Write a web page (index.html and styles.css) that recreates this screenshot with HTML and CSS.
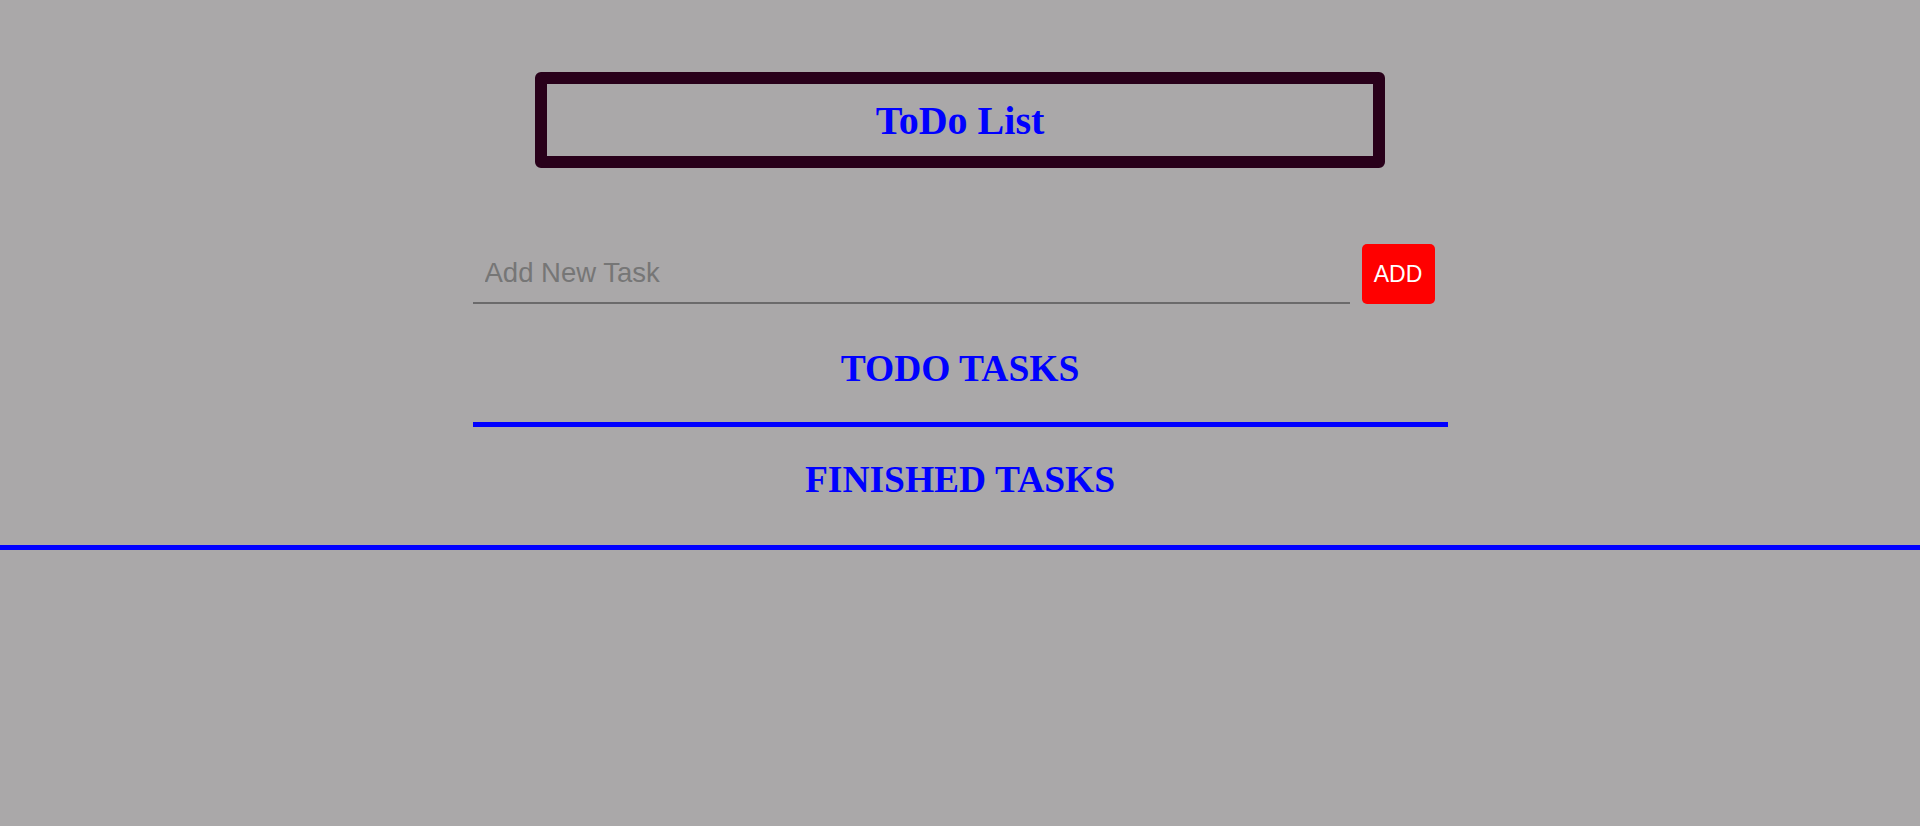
FILE: index.html
```html
<!DOCTYPE html>
<html lang="en">
<head>
<meta charset="utf-8">
<title>ToDo List</title>
<link rel="stylesheet" href="styles.css">
</head>
<body>
  <header class="title-box">
    <h1 class="title">ToDo List</h1>
  </header>
  <main class="container">
    <form class="add-form" onsubmit="return false">
      <input class="task-input" type="text" placeholder="Add New Task">
      <button class="add-btn" type="submit">ADD</button>
    </form>
    <section class="todo">
      <h2 class="section-title todo-title">TODO TASKS</h2>
      <div class="divider"></div>
    </section>
    <section class="finished">
      <h2 class="section-title finished-title">FINISHED TASKS</h2>
    </section>
  </main>
  <div class="full-rule"></div>
</body>
</html>
```

FILE: styles.css
```css
html, body {
  margin: 0;
  padding: 0;
}

body {
  background: #aaa8a9;
  font-family: "Liberation Serif", "Times New Roman", serif;
  min-height: 826px;
}

.title-box {
  width: 826px;
  margin: 72px auto 0;
  border: 12px solid #29001a;
  border-radius: 6px;
  height: 70px;
  padding-top: 2px;
  display: flex;
  align-items: center;
  justify-content: center;
}

.title {
  margin: 0;
  font-size: 40px;
  line-height: 70px;
  font-weight: bold;
  color: #0000ff;
}

.container {
  width: 975px;
  margin: 0 auto;
}

.add-form {
  display: flex;
  gap: 12px;
  margin-top: 76px;
}

.task-input {
  width: 877px;
  height: 60px;
  box-sizing: border-box;
  border: none;
  border-bottom: 2px solid #6b6a6b;
  background: transparent;
  padding: 0 12px;
  font-family: "Liberation Sans", Arial, sans-serif;
  font-size: 27.5px;
  color: #333;
  outline: none;
}

.task-input::placeholder {
  color: #767676;
}

.add-btn {
  width: 73px;
  height: 60px;
  border: none;
  border-radius: 5px;
  background: #ff0000;
  color: #ffffff;
  font-family: "Liberation Sans", Arial, sans-serif;
  font-size: 23px;
  padding: 0;
  cursor: pointer;
}

.section-title {
  margin: 0;
  text-align: center;
  font-size: 37.5px;
  line-height: 44px;
  font-weight: bold;
  color: #0000ff;
}

.todo-title {
  margin: 43px 0 31px;
}

.divider {
  height: 5px;
  background: #0000ff;
}

.finished-title {
  margin: 31px 0 43px;
}

.full-rule {
  height: 5px;
  background: #0000ff;
}
```
